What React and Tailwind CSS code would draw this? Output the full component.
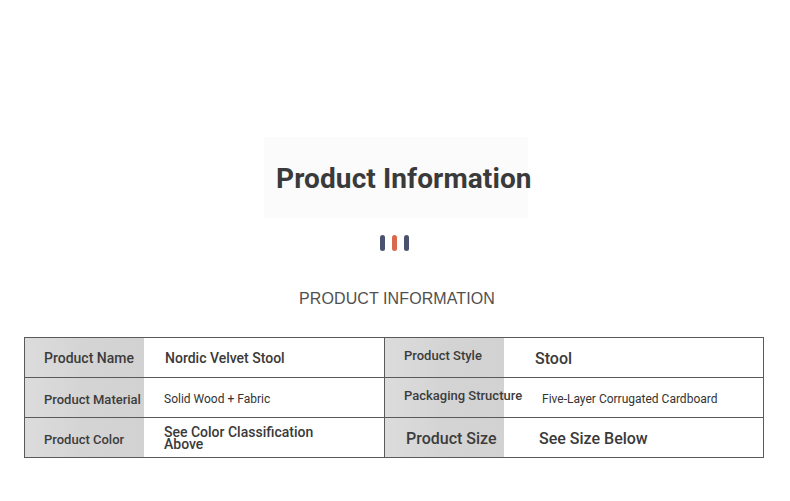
export default function App() {
  const font = { fontFamily: "Roboto, 'Liberation Sans', sans-serif" };
  const Label = ({ children, className = "" }) => (
    <div className={"w-[119px] shrink-0 bg-gradient-to-r from-[#dcdcdc] via-[#d4d4d4] to-[#d2d2d2] flex items-center whitespace-nowrap text-[#3c3c3c] font-medium " + className}>
      {children}
    </div>
  );
  return (
    <div className="w-[790px] h-[501px] bg-white flex flex-col items-center" style={font}>
      <div className="mt-[137px] w-[264px] h-[81px] bg-[#fbfbfb] flex items-center pl-[12px] ml-[2px] pt-[2px]">
        <span className="whitespace-nowrap text-[28px] font-bold text-[#3a3a3a] leading-none tracking-[0.1px]">Product Information</span>
      </div>
      <div className="mt-[17px] flex gap-[7px] ml-[-2px]">
        <div className="w-[5px] h-[16px] rounded-full bg-[#4b5270]" />
        <div className="w-[5px] h-[16px] rounded-full bg-[#d86a4b]" />
        <div className="w-[5px] h-[16px] rounded-full bg-[#4b5270]" />
      </div>
      <div className="mt-[40px] text-[16px] text-[#505050] leading-none ml-[4px] tracking-[0.1px]" style={{ fontFamily: "'Liberation Sans', Arial, sans-serif" }}>PRODUCT INFORMATION</div>
      <div className="mt-[30px] w-[740px] self-start ml-[24px] border border-[#5a5a5a] flex">
        <div className="w-[360px] shrink-0 flex flex-col border-r border-[#5a5a5a]">
          <div className="h-[40px] flex border-b border-[#5a5a5a]">
            <Label className="pl-[19px] text-[14px] pt-[2px]">Product Name</Label>
            <div className="flex items-center pl-[21px] text-[14px] font-medium text-[#3a3a3a] pt-[2px]">Nordic Velvet Stool</div>
          </div>
          <div className="h-[40px] flex border-b border-[#5a5a5a]">
            <Label className="pl-[19px] text-[13px] pt-[4px]">Product Material</Label>
            <div className="flex items-center pl-[20px] text-[12px] text-[#333] pt-[2px]">Solid Wood + Fabric</div>
          </div>
          <div className="h-[39px] flex">
            <Label className="pl-[19px] text-[13px] pt-[4px]">Product Color</Label>
            <div className="flex flex-col justify-center pl-[20px] text-[14px] font-medium text-[#3a3a3a] leading-[12px]">
              <span>See Color Classification</span>
              <span>Above</span>
            </div>
          </div>
        </div>
        <div className="flex-1 flex flex-col">
          <div className="h-[40px] flex border-b border-[#5a5a5a]">
            <Label className="pl-[19px] text-[13px] pb-[3px]">Product Style</Label>
            <div className="flex items-center pl-[31px] text-[16px] font-medium text-[#3a3a3a] pt-[2px]">Stool</div>
          </div>
          <div className="h-[40px] flex border-b border-[#5a5a5a]">
            <Label className="pl-[19px] text-[13px] pb-[3px]">
              <span className="relative z-10">Packaging Structure</span>
            </Label>
            <div className="flex items-center pl-[38px] text-[12px] text-[#333] pt-[2px]">Five-Layer Corrugated Cardboard</div>
          </div>
          <div className="h-[39px] flex">
            <Label className="pl-[21px] text-[16px] pt-[2px]">Product Size</Label>
            <div className="flex items-center pl-[35px] text-[16px] font-medium text-[#3a3a3a] pt-[2px]">See Size Below</div>
          </div>
        </div>
      </div>
    </div>
  );
}
